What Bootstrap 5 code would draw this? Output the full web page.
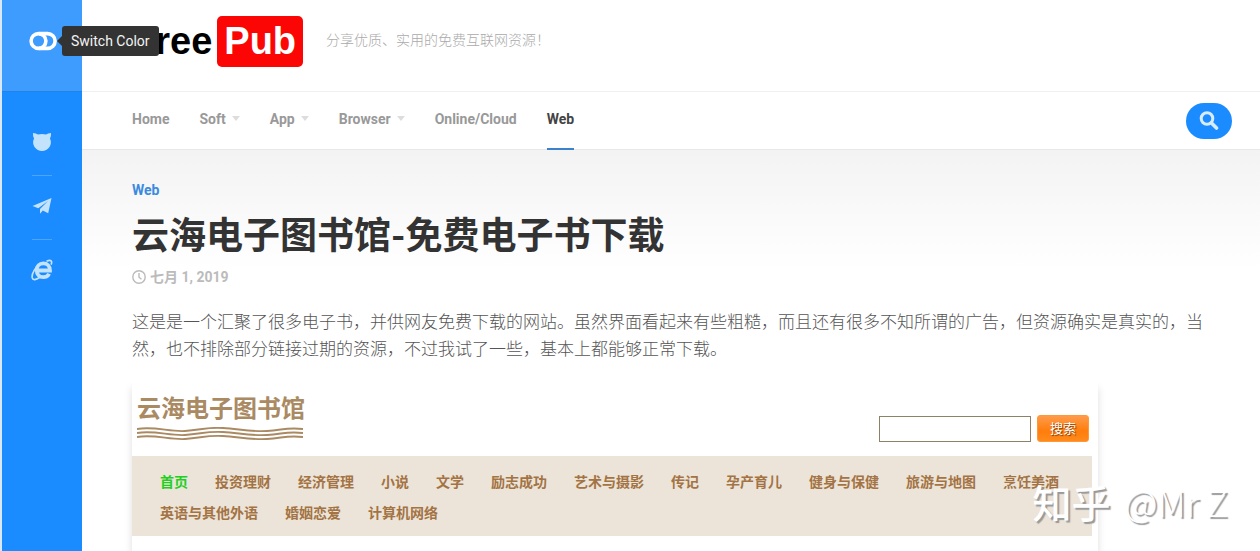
<!DOCTYPE html>
<html lang="zh-CN">
<head>
<meta charset="utf-8">
<meta name="viewport" content="width=device-width, initial-scale=1">
<title>云海电子图书馆-免费电子书下载 - FreePub</title>
<link href="https://cdn.jsdelivr.net/npm/bootstrap@5.3.0/dist/css/bootstrap.min.css" rel="stylesheet">
<style>
  body { font-family: Roboto, "Noto Sans CJK SC", sans-serif; font-size: 14px; line-height: 20px; color: #666; background: #fff; }
  a { text-decoration: none; }

  /* left rail */
  .rail { width: 82px; background: #1a8cff; border-left: 2px solid #d8e8f8; }
  .rail-top { height: 92px; padding: 0 0 10px 2px; background: #3e9cff; border-bottom: 1px solid #2283e6; }
  .switch-btn { background: none; border: 0; padding: 0; line-height: 0; }
  .rail-nav { padding-top: 19px; }
  .rail-link { height: 64px; width: 20px; padding-bottom: 3px; color: #c3e2fc; }
  .rail-link + .rail-link { border-top: 1px solid #4ca5fb; }
  .tip { left: 60px; top: 26px; height: 30px; padding: 0 9px; border-radius: 3px; background: #333; color: #f4f4f4; white-space: nowrap; z-index: 10; }
  .tip::before { content: ""; position: absolute; left: -5px; top: 10px; border: 5px solid transparent; border-left: 0; border-right-color: #333; }

  /* masthead */
  .masthead { height: 92px; padding: 0 50px 8px; border-bottom: 1px solid #f0f0f0; }
  .brand { font: bold 38px/51px "Liberation Sans", Arial, sans-serif; color: #000; }
  .brand-tag { background: #fb0505; color: #fff; border-radius: 5px; padding: 0 7px; margin-left: 5px; }
  .tagline { color: #aaa; font-weight: 300; margin-left: 23px; padding-bottom: 4px; }
  .menu { height: 58px; padding: 0 28px 0 50px; border-bottom: 1px solid #e8e8e8; }
  .menu-list { gap: 30px; font-weight: 700; }
  .menu-list a { color: #999; height: 58px; padding-bottom: 2px; border-bottom: 2px solid transparent; }
  .menu-list a.active { color: #444; border-color: #3b82cc; }
  .has-sub::after { content: ""; margin-left: 6px; border: 4px solid transparent; border-top-width: 5px; border-bottom: 0; border-top-color: #ddd; }
  .find { width: 46px; height: 36px; border-radius: 18px; background: #1a8cff; color: #d8ecff; }

  /* article */
  .post { padding: 30px 50px 0; background: linear-gradient(#f3f3f3, #fff 120px); }
  .post-cat { color: #3b8ae0; font-weight: 700; }
  .post-title { font-size: 37px; line-height: 50px; font-weight: 700; color: #333; margin: 12px 0 5px; }
  .post-date { color: #bbb; font-weight: 700; gap: 4px; }
  .post-text { font-size: 17px; line-height: 27px; font-weight: 300; color: #555; margin: 22px 0 17px; }

  /* library preview */
  .preview { max-width: 966px; padding-right: 6px; box-shadow: 0 8px 8px #0002; background: #fff; }
  .lib-head { height: 76px; padding: 11px 3px 0 5px; }
  .lib-name { font-size: 24px; line-height: 36px; font-weight: 700; color: #aa8a63; }
  .lib-input { width: 152px; height: 26px; border: 1px solid #8c8268; background: #fff; }
  .lib-search { gap: 6px; }
  .lib-go { width: 52px; height: 27px; font-size: 13px; color: #fff; border: 1px solid #ff9838; border-radius: 3px; background: linear-gradient(#ff9b4a, #ff7d0c 60%, #ff8a1c); text-shadow: 1px 1px 1px #7a3800; }
  .lib-nav { background: #ece4d8; padding: 16px 20px 13px 28px; column-gap: 27px; line-height: 20px; row-gap: 11px; font-weight: 700; }
  .lib-nav a { color: #a37344; }
  .lib-nav a.here { color: #21cf21; }

  .watermark { right: 32px; bottom: 30px; gap: 14px; font: 300 36px/40px "Noto Sans CJK SC", sans-serif; color: #fff; text-shadow: 2px 2px 1px #999; pointer-events: none; }
  .watermark-site { font-weight: 500; font-size: 39px; }
</style>
</head>
<body>
<div class="d-flex min-vh-100 position-relative">
  <aside class="rail flex-shrink-0 position-relative">
    <div class="rail-top d-flex align-items-center justify-content-center">
      <button class="switch-btn" type="button" aria-label="Switch Color">
        <svg width="28" height="20" viewBox="0 0 28 20" fill="none" stroke="#fff" stroke-width="3.6"><circle cx="9.500" cy="10" r="7.400"/><path d="M10 2.600h8.700a7.400 7.400 0 0 1 0 14.800H10"/></svg>
      </button>
    </div>
    <div class="tip position-absolute d-flex align-items-center" role="tooltip">Switch Color</div>
    <nav class="rail-nav d-flex flex-column align-items-center" aria-label="Social">
      <a class="rail-link d-flex align-items-center justify-content-center" href="#" aria-label="GitHub">
        <svg class="flex-shrink-0" width="20" height="20" viewBox="0 0 20 20" fill="currentColor"><path d="M1 1q3.200 0 5 1.500 4-1 8 0Q15.800 1 19 1q.3 3.500-1 5.500Q20 11 17.500 15q-3 4-7.500 4t-7.500-4Q0 11 2 6.500.7 4.500 1 1z"/></svg>
      </a>
      <a class="rail-link d-flex align-items-center justify-content-center" href="#" aria-label="Telegram">
        <svg class="flex-shrink-0" width="20" height="18" viewBox="0 0 20 18" fill="currentColor"><path d="M19.500 1 .5 9l5.800 2.200L16 4 8 12v4.800l2.800-3.300 5.400 2.700z"/></svg>
      </a>
      <a class="rail-link d-flex align-items-center justify-content-center" href="#" aria-label="Internet Explorer">
        <svg class="flex-shrink-0" width="22" height="22" viewBox="0 0 22 22" fill="none" stroke="currentColor"><path stroke-width="3.800" d="M6 11.500h13C19 7 16.200 4.400 12.300 4.400S5.700 7.300 5.700 11.200s2.600 6.900 6.600 6.900c2.700 0 4.800-1.200 5.800-3.400"/><path stroke-width="1.700" d="M15.500 2.300c2.800-1.200 4.600-1.200 5 .2.300 1 .1 2-.5 3.200M9.500 4.500C4.500 8 .5 14.500 1.200 18.700c.6 3 4 2 7.300-.2"/></svg>
      </a>
    </nav>
  </aside>

  <div class="flex-grow-1 d-flex flex-column">
    <header>
      <div class="masthead d-flex align-items-center">
        <a class="brand d-flex" href="#"><span>Free</span><span class="brand-tag">Pub</span></a>
        <span class="tagline">分享优质、实用的免费互联网资源！</span>
      </div>
      <div class="menu d-flex align-items-center justify-content-between">
        <nav class="menu-list d-flex" aria-label="Main">
          <a class="d-flex align-items-center" href="#">Home</a>
          <a class="has-sub d-flex align-items-center" href="#">Soft</a>
          <a class="has-sub d-flex align-items-center" href="#">App</a>
          <a class="has-sub d-flex align-items-center" href="#">Browser</a>
          <a class="d-flex align-items-center" href="#">Online/Cloud</a>
          <a class="active d-flex align-items-center" href="#" aria-current="page">Web</a>
        </nav>
        <button class="find btn border-0 p-0 d-flex align-items-center justify-content-center" type="button" aria-label="Search">
          <svg width="20" height="20" viewBox="0 0 20 20" fill="none" stroke="currentColor"><circle cx="8" cy="7.500" r="5.800" stroke-width="3"/><path d="m12.500 12 5 5" stroke-width="3.600" stroke-linecap="round"/></svg>
        </button>
      </div>
    </header>

    <main class="post flex-grow-1 d-flex flex-column">
      <a class="post-cat align-self-start" href="#">Web</a>
      <h1 class="post-title">云海电子图书馆-免费电子书下载</h1>
      <div class="post-date d-flex align-items-center">
        <svg width="14" height="14" viewBox="0 0 14 14" fill="none" stroke="currentColor" stroke-width="1.400"><circle cx="7" cy="7" r="6.200"/><path d="M7 3v4.200l2.500 2"/></svg>
        <time datetime="2019-07-01">七月 1, 2019</time>
      </div>
      <p class="post-text">这是是一个汇聚了很多电子书，并供网友免费下载的网站。虽然界面看起来有些粗糙，而且还有很多不知所谓的广告，但资源确实是真实的，当然，也不排除部分链接过期的资源，不过我试了一些，基本上都能够正常下载。</p>

      <section class="preview flex-grow-1" aria-label="云海电子图书馆">
        <div class="lib-head d-flex justify-content-between align-items-start">
          <div>
            <div class="lib-name">云海电子图书馆</div>
            <svg class="d-block" width="166" height="14" viewBox="0 0 166 14" fill="none" stroke="#aa8a63" stroke-width="1.900"><path id="wave" d="M0 2C18-1 32 5 48 4S70 0 86 1s28 4 44 3 20-4 36-2"/><use href="#wave" y="4"/><use href="#wave" y="8"/></svg>
          </div>
          <form class="lib-search d-flex align-items-center mt-4">
            <input class="lib-input" type="text" aria-label="搜索关键词">
            <button class="lib-go p-0" type="button">搜索</button>
          </form>
        </div>
        <nav class="lib-nav d-flex flex-wrap" aria-label="分类">
          <a class="here" href="#">首页</a><a href="#">投资理财</a><a href="#">经济管理</a><a href="#">小说</a><a href="#">文学</a><a href="#">励志成功</a><a href="#">艺术与摄影</a><a href="#">传记</a><a href="#">孕产育儿</a><a href="#">健身与保健</a><a href="#">旅游与地图</a><a href="#">烹饪美酒</a><a href="#">英语与其他外语</a><a href="#">婚姻恋爱</a><a href="#">计算机网络</a>
        </nav>
      </section>
    </main>
  </div>
  <div class="watermark position-absolute d-flex align-items-center"><span class="watermark-site">知乎</span><span>@Mr Z</span></div>
</div>
<script src="https://cdn.jsdelivr.net/npm/bootstrap@5.3.0/dist/js/bootstrap.bundle.min.js"></script>
</body>
</html>
